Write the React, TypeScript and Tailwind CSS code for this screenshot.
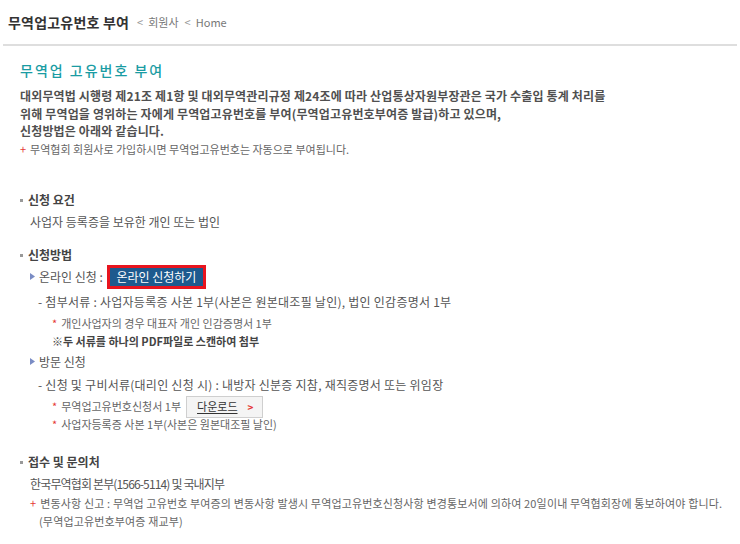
import React from "react";

const font = { fontFamily: '"Noto Sans CJK KR", "Noto Sans", sans-serif' };

function Square() {
  return <span className="inline-block w-[3px] h-[3px] bg-[#999] mr-[5px] translate-y-[-3px]" />;
}
function Tri() {
  return (
    <svg width="5" height="7" viewBox="0 0 5 7" className="mr-[4px] shrink-0">
      <path d="M0 0 L5 3.5 L0 7 Z" fill="#7a8cc4" />
    </svg>
  );
}
function Star() {
  return <span className="text-[#e53935] mr-[4px] text-[11px]">*</span>;
}
function Plus() {
  return <span className="text-[#e53935] mr-[4px] text-[11px]">+</span>;
}

export default function App() {
  return (
    <div className="w-[740px] h-[544px] bg-white text-[#555] overflow-hidden" style={font}>
      <div className="h-[46px] flex items-center pl-[5px] mx-[3px] border-b-2 border-[#dedede]">
        <span className="text-[14px] font-bold text-[#333] tracking-[0.2px]">무역업고유번호 부여</span>
        <span className="text-[11px] text-[#999] ml-[8px]">&lt;</span>
        <span className="text-[11px] text-[#777] ml-[5px]">회원사</span>
        <span className="text-[11px] text-[#999] ml-[6px]">&lt;</span>
        <span className="text-[11px] text-[#777] ml-[5px]">Home</span>
      </div>

      <div className="pl-[20px]">
        <div className="mt-[14px] h-[20px] leading-[20px] text-[14px] text-[#1a9ca3] tracking-[2px] font-medium">
          무역업 고유번호 부여
        </div>
        <div className="mt-[7px] text-[12px] leading-[17.5px] font-bold text-[#505050] tracking-[0.15px]">
          <div>대외무역법 시행령 제21조 제1항 및 대외무역관리규정 제24조에 따라 산업통상자원부장관은 국가 수출입 통계 처리를</div>
          <div>위해 무역업을 영위하는 자에게 무역업고유번호를 부여(무역업고유번호부여증 발급)하고 있으며,</div>
          <div>신청방법은 아래와 같습니다.</div>
        </div>
        <div className="mt-[1px] text-[11px] leading-[17px] text-[#666]">
          <Plus />무역협회 회원사로 가입하시면 무역업고유번호는 자동으로 부여됩니다.
        </div>

        <div className="mt-[33px] text-[12px] leading-[18px] font-bold text-[#444]">
          <Square />신청 요건
        </div>
        <div className="mt-[4px] ml-[10px] text-[12px] leading-[18px]">사업자 등록증을 보유한 개인 또는 법인</div>

        <div className="mt-[15px] text-[12px] leading-[18px] font-bold text-[#444]">
          <Square />신청방법
        </div>
        <div className="mt-[1px] ml-[10px] h-[24px] flex items-center text-[12px]">
          <Tri />
          <span>온라인 신청 :</span>
          <span className="ml-[4px] h-[24px] w-[99px] border-[3px] border-[#e8141e] bg-[#1d5a8e] text-white text-[12px] flex items-center justify-center whitespace-nowrap">
            온라인 신청하기
          </span>
        </div>
        <div className="mt-[4px] ml-[18px] text-[12px] leading-[18px] tracking-[0.25px]">
          - 첨부서류 : 사업자등록증 사본 1부(사본은 원본대조필 날인), 법인 인감증명서 1부
        </div>
        <div className="mt-[3px] ml-[32px] text-[11px] leading-[18px] text-[#666]">
          <Star />개인사업자의 경우 대표자 개인 인감증명서 1부
        </div>
        <div className="ml-[32px] text-[11px] leading-[18px] font-bold text-[#444]">
          ※두 서류를 하나의 PDF파일로 스캔하여 첨부
        </div>
        <div className="mt-[3px] ml-[10px] flex items-center text-[12px] leading-[18px]">
          <Tri />
          <span>방문 신청</span>
        </div>
        <div className="mt-[5px] ml-[18px] text-[12px] leading-[18px] tracking-[0.25px]">
          - 신청 및 구비서류(대리인 신청 시) : 내방자 신분증 지참, 재직증명서 또는 위임장
        </div>
        <div className="mt-[4px] ml-[32px] h-[18px] flex items-center text-[11px] text-[#666]">
          <Star />
          <span>무역업고유번호신청서 1부</span>
          <span className="ml-[5px] h-[22px] w-[77px] border border-[#cfcfcf] bg-[#f4f4f4] flex items-center pl-[10px] text-[11px] text-[#333]">
            <span className="underline underline-offset-2">다운로드</span>
            <span className="ml-[10px] text-[#e53935] font-bold text-[10px]">&gt;</span>
          </span>
        </div>
        <div className="ml-[32px] text-[11px] leading-[16px] text-[#666]">
          <Star />사업자등록증 사본 1부(사본은 원본대조필 날인)
        </div>

        <div className="mt-[21px] text-[12px] leading-[18px] font-bold text-[#444]">
          <Square />접수 및 문의처
        </div>
        <div className="mt-[4px] ml-[10px] text-[12px] leading-[18px] tracking-[-0.85px]">한국무역협회 본부(1566-5114) 및 국내지부</div>
        <div className="mt-[1px] ml-[10px] text-[11px] leading-[18px] text-[#666] tracking-[0.15px]">
          <div>
            <Plus />변동사항 신고 : 무역업 고유번호 부여증의 변동사항 발생시 무역업고유번호신청사항 변경통보서에 의하여 20일이내 무역협회장에 통보하여야 합니다.
          </div>
          <div className="ml-[9px]">(무역업고유번호부여증 재교부)</div>
        </div>
      </div>
    </div>
  );
}
